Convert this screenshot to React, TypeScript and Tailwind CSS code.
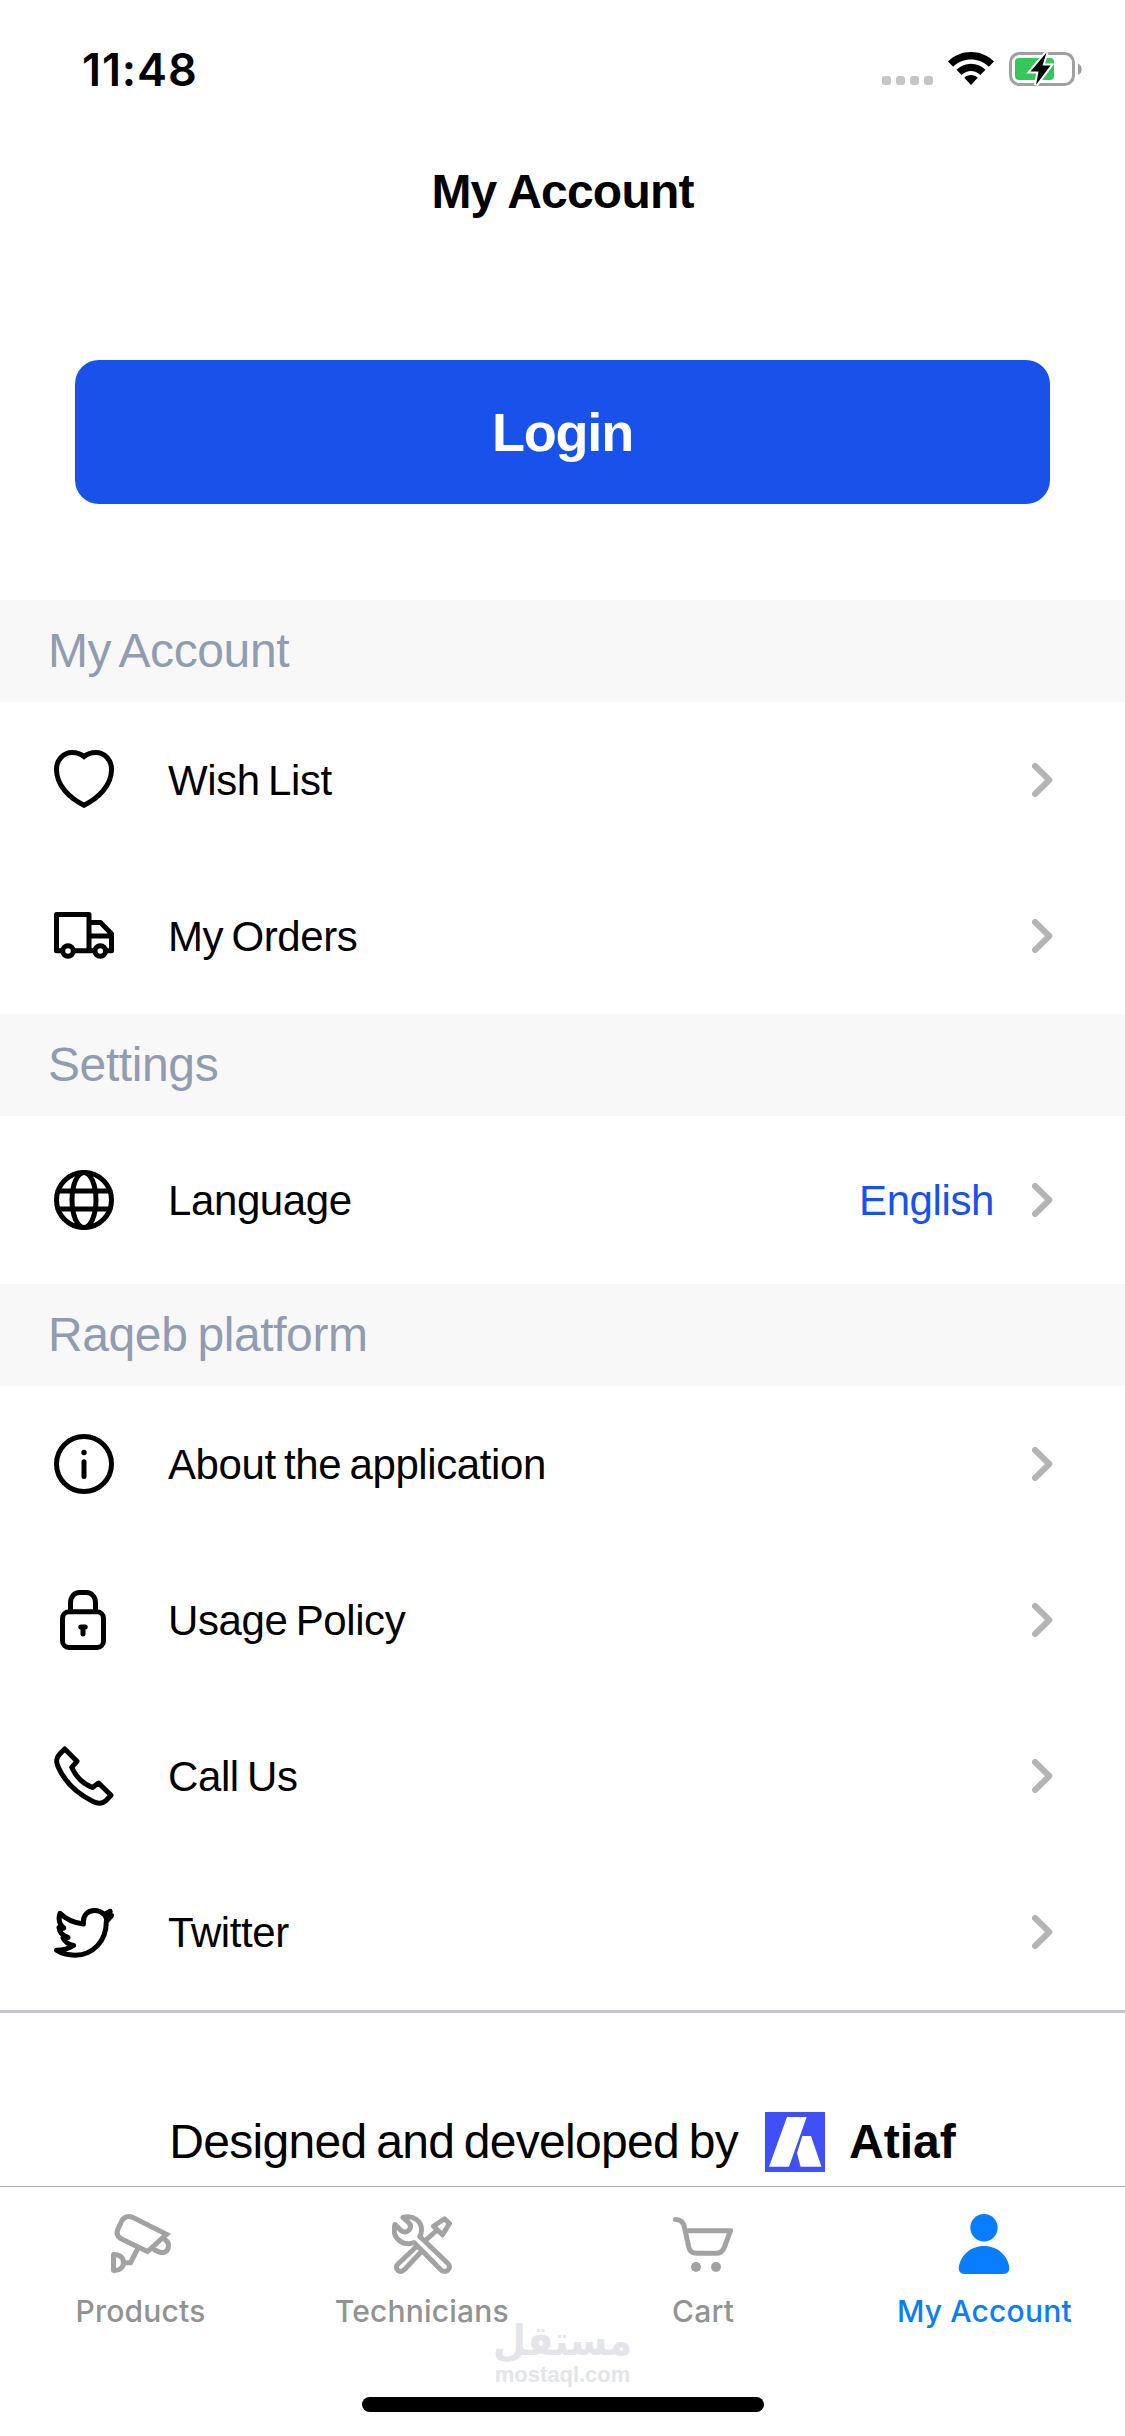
import type { ReactNode } from "react";
import { clsx } from "clsx";

type IconProps = { children: ReactNode; className?: string };

function LineIcon({ children, className }: IconProps) {
  return (
    <svg
      viewBox="0 0 60 60"
      fill="none"
      stroke="currentColor"
      strokeWidth={5}
      strokeLinecap="round"
      strokeLinejoin="round"
      className={clsx("size-[60px] shrink-0", className)}
      aria-hidden="true"
    >
      {children}
    </svg>
  );
}

const HeartIcon = () => (
  <LineIcon>
    <path
      strokeLinejoin="miter"
      d="M30 6.5C26.5 3.8 22.5 2.5 18.5 2.5C9 2.5 2.5 10 2.5 19.5C2.5 35.5 15.5 48 30 55.3C44.5 48 57.5 35.5 57.5 19.5C57.5 10 51 2.5 41.5 2.5C37.5 2.5 33.5 3.8 30 6.5Z"
    />
  </LineIcon>
);

const TruckIcon = () => (
  <LineIcon>
    <path d="M7 44.8H2.5V8.5H35V44.8H21.5M35 16.5H46.5L57.5 27.7V44.8H53.5M35 44.8H39M37 30H57" />
    <circle cx="14" cy="45" r="5.3" />
    <circle cx="46.3" cy="45" r="5.3" />
  </LineIcon>
);

const GlobeIcon = () => (
  <LineIcon>
    <circle cx="30" cy="30" r="27.5" />
    <ellipse cx="30" cy="30" rx="12" ry="27.5" />
    <path d="M4 21H56M4 39H56" />
  </LineIcon>
);

const InfoIcon = () => (
  <LineIcon>
    <circle cx="30" cy="30" r="27.5" />
    <path d="M30 27.8V42.5" />
    <circle cx="30" cy="18.5" r="2.7" fill="currentColor" stroke="none" />
  </LineIcon>
);

const LockIcon = () => (
  <LineIcon>
    <rect x="8.5" y="21.8" width="41" height="35.7" rx="6.5" />
    <path d="M16.5 21V13C16.5 6.5 20.5 2.5 25.5 2.5H32.5C37.5 2.5 41.5 6.5 41.5 13V21" />
    <path d="M26.8 37H31.2M29 38.5V44" />
  </LineIcon>
);

const PhoneIcon = () => (
  <LineIcon>
    <path d="M10.7 3L23 15.3L17.7 21.3C22 31 29.5 38 38.5 41.5L44.5 37L57 49.3L52 54.5C48 58.2 44 58.2 39 55.5C22 47 10 34.5 4 20.5C1.8 15.5 2 12 6 7.8Z" />
  </LineIcon>
);

const TwitterIcon = () => (
  <LineIcon>
    <path d="M6 11.3C12 17.5 20.5 21 29.5 22C28.5 13 34 8.6 40.5 8.6C45 8.6 47.5 10 50 12.5L56 9.5L55 13L57.5 13.5L52.3 19.5C52.5 39 39 53 21 53.2C14 53.2 7.5 51.5 2.5 48.2C9 48.2 15 46.5 19.5 43.5C14.5 42.5 11 40 9 36C11 36.5 12.5 36.2 14 35.5C8.5 33.8 5.5 30.5 5 25.5C6.5 26.4 8 26.5 9.8 26C5 22 4 17.5 6 11.3Z" />
    <path d="M51 13L56 9.5L53 18Z" fill="currentColor" />
  </LineIcon>
);

const CameraIcon = () => (
  <LineIcon>
    <path
      strokeLinejoin="miter"
      d="M22 3.5L55.5 20.3L36.5 37.5L10.5 25C6.5 23 5.3 19.5 6.8 15.5L10.5 7.5C12.5 3 17.5 1.3 22 3.5Z"
    />
    <path d="M53.5 25.5C59 27.5 58.8 36.5 53 38.4C50 39.3 46.5 37.3 43.5 35.7" />
    <path strokeLinejoin="miter" d="M26.3 35.5L19.5 48.7H14" />
    <path d="M2.5 40.5V56.5C9 57 12.5 53 12.5 48.5C12.5 44 9 40 2.5 40.5Z" />
  </LineIcon>
);

const ToolsIcon = () => (
  <LineIcon>
    <path d="M3 10.5L9 16.5C11.5 18.5 15 18.5 17 16C19.2 13.5 18.8 11 17 9L11 3.5C21 .5 29.5 7 29.5 15.5C29.5 18.5 29 20.5 27.8 22.5L56 49.5C58.5 52 57.5 55 55.5 56.5C53.5 58 50.5 57.5 48.5 55.5L22 28.5C12 32.5 -1 25 3 10.5Z" />
    <path d="M23.5 33.5L6 50C3.8 52.2 4 55 6 56.5C8 58 10.5 57.5 12.5 55.5L28.5 38.5M34 26L44 17" />
    <path d="M41.5 12.3L52.5 4.8L57.5 9.5L50.5 20.8Z" />
  </LineIcon>
);

const CartIcon = () => (
  <LineIcon>
    <path d="M2.5 5.5C8 5.5 10.5 8 11.5 13.5L15.5 32C16.5 37.5 19 39.3 24 39.3H43C48 39.3 50 37 51.5 33L57.5 16.7H12.5" />
    <circle cx="23" cy="53" r="5" fill="currentColor" stroke="none" />
    <circle cx="43" cy="53" r="5" fill="currentColor" stroke="none" />
  </LineIcon>
);

const UserIcon = () => (
  <svg viewBox="0 0 60 60" fill="currentColor" className="size-[60px]" aria-hidden="true">
    <circle cx="30" cy="13.7" r="13.7" />
    <path d="M30 32C43.5 32 53.5 41.5 55.2 53C55.7 57 53.5 60 49.5 60H10.5C6.5 60 4.3 57 4.8 53C6.5 41.5 16.5 32 30 32Z" />
  </svg>
);

const Chevron = () => (
  <svg viewBox="0 0 21 34" className="h-[34px] w-[21px] shrink-0" aria-hidden="true">
    <path d="M3 3L17.3 17L3 31" fill="none" stroke="#b3b4b6" strokeWidth={6} strokeLinecap="round" strokeLinejoin="round" />
  </svg>
);

const AtiafLogo = () => (
  <svg viewBox="0 0 60 60" className="size-[60px] shrink-0" aria-hidden="true">
    <rect width="60" height="60" fill="#3f50f6" />
    <path d="M22 5H41.7L24 54.7H4Z" fill="#fff" />
    <path d="M37.3 24H46L56.5 54.7H35.6L32 41Z" fill="#fff" />
  </svg>
);

function StatusIcons() {
  return (
    <svg viewBox="0 0 204 40" className="h-10 w-[204px]" aria-hidden="true">
      <g fill="#c5c5c9">
        <rect x="2" y="27" width="9" height="9" rx="3" />
        <rect x="16" y="27" width="9" height="9" rx="3" />
        <rect x="30" y="27" width="9" height="9" rx="3" />
        <rect x="44" y="27" width="9" height="9" rx="3" />
      </g>
      <path d="M68 12.5C80.5 -.2 101.5 -.2 114 12.5L108.8 17.7C99 8 83 8 73.2 17.7Z" />
      <path d="M76.5 20.8C84.5 12.8 97.5 12.8 105.5 20.8L100.3 26C95 20.7 87 20.7 81.7 26Z" />
      <path d="M84.3 28.7C88 25 94 25 97.7 28.7L91 36Z" />
      <rect x="130.5" y="4.5" width="63" height="31" rx="9" fill="none" stroke="#a0a0a0" strokeWidth="3" />
      <path d="M198 14.5C203 16.5 203 24 198 26Z" fill="#a0a0a0" />
      <rect x="135" y="9" width="39" height="22" rx="4" fill="#34c759" />
      <path d="M166.5 3.5L150.5 22.5H158.5L156 36L170.5 16.5H162.5Z" fill="#000" stroke="#fff" strokeWidth="4" paintOrder="stroke" />
    </svg>
  );
}

type Item = { label: string; icon: ReactNode; value?: string };

const sections: { title: string; items: Item[] }[] = [
  {
    title: "My Account",
    items: [
      { label: "Wish List", icon: <HeartIcon /> },
      { label: "My Orders", icon: <TruckIcon /> },
    ],
  },
  {
    title: "Settings",
    items: [{ label: "Language", icon: <GlobeIcon />, value: "English" }],
  },
  {
    title: "Raqeb platform",
    items: [
      { label: "About the application", icon: <InfoIcon /> },
      { label: "Usage Policy", icon: <LockIcon /> },
      { label: "Call Us", icon: <PhoneIcon /> },
      { label: "Twitter", icon: <TwitterIcon /> },
    ],
  },
];

const tabs = [
  { label: "Products", icon: <CameraIcon /> },
  { label: "Technicians", icon: <ToolsIcon /> },
  { label: "Cart", icon: <CartIcon /> },
  { label: "My Account", icon: <UserIcon />, active: true },
];

function Row({ label, icon, value }: Item) {
  return (
    <button
      className={clsx(
        "flex w-full items-center pl-[54px] pr-[72px] text-left text-[42px] leading-none tracking-[-0.4px] [word-spacing:-3px]",
        value ? "h-[168px]" : "h-[156px]"
      )}
    >
      {icon}
      <span className="ml-[54px] flex-1 pt-0.5">{label}</span>
      {value && <span className="mr-[38px] pt-0.5 text-[#1852ea]">{value}</span>}
      <Chevron />
    </button>
  );
}

export default function App() {
  return (
    <div className="relative flex h-[2436px] w-[1125px] flex-col overflow-hidden bg-white font-['Liberation_Sans',Arial,sans-serif] text-black">
      <div className="flex h-[132px] items-center justify-between pl-[82px] pr-[41px] pt-1.5">
        <span className="font-['Inter',sans-serif] text-[45px] font-semibold leading-none tracking-[0.9px]">11:48</span>
        <StatusIcons />
      </div>

      <header className="flex h-[118px] items-center justify-center pt-0.5">
        <h1 className="text-5xl font-bold leading-none tracking-[-0.8px]">My Account</h1>
      </header>

      <div className="px-[75px] pb-24 pt-[110px]">
        <button className="flex h-36 w-full items-center justify-center rounded-3xl bg-[#1852ea] text-[54px] font-bold leading-none tracking-[-1.2px] text-white">
          Login
        </button>
      </div>

      {sections.map((section) => (
        <section key={section.title}>
          <h2 className="flex h-[102px] items-center bg-[#f8f8f8] pl-12 text-5xl leading-none tracking-[-0.4px] text-[#929cb0] [word-spacing:-3px]">
            {section.title}
          </h2>
          {section.items.map((item) => (
            <Row key={item.label} {...item} />
          ))}
        </section>
      ))}

      <footer className="flex flex-1 items-start justify-center border-t-[3px] border-[#c4c5c9] pt-[99px]">
        <div className="flex h-[60px] items-center text-5xl leading-none">
          <span className="tracking-[-0.7px] [word-spacing:-3px]">Designed and developed by</span>
          <span className="ml-[27px] mr-6">
            <AtiafLogo />
          </span>
          <span className="font-bold">Atiaf</span>
        </div>
      </footer>

      <nav className="flex h-[250px] items-start border-t border-[#b2b2b2] font-['Inter',sans-serif]">
        {tabs.map((tab) => (
          <button
            key={tab.label}
            className={clsx(
              "flex flex-1 flex-col items-center pt-[27px]",
              tab.active ? "text-[#087eff]" : "text-[#a2a2a2]"
            )}
          >
            {tab.icon}
            <span
              className={clsx(
                "mt-[22px] text-[30px] font-medium leading-none tracking-[0.2px]",
                !tab.active && "text-[#929292]"
              )}
            >
              {tab.label}
            </span>
          </button>
        ))}
      </nav>

      {/* watermark over the tab bar */}
      <div className="absolute left-[494px] top-[2319px] flex w-[137px] flex-col items-center text-[#e3e5e8]">
        <span dir="rtl" className="h-11 scale-y-110 whitespace-nowrap font-['DejaVu_Sans',sans-serif] text-[38px] font-bold leading-[44px]">
          مستقل
        </span>
        <span className="text-[22px] font-bold leading-6">mostaql.com</span>
      </div>

      {/* home indicator */}
      <div className="absolute bottom-6 left-[362px] h-[15px] w-[402px] rounded-full bg-black" />
    </div>
  );
}
